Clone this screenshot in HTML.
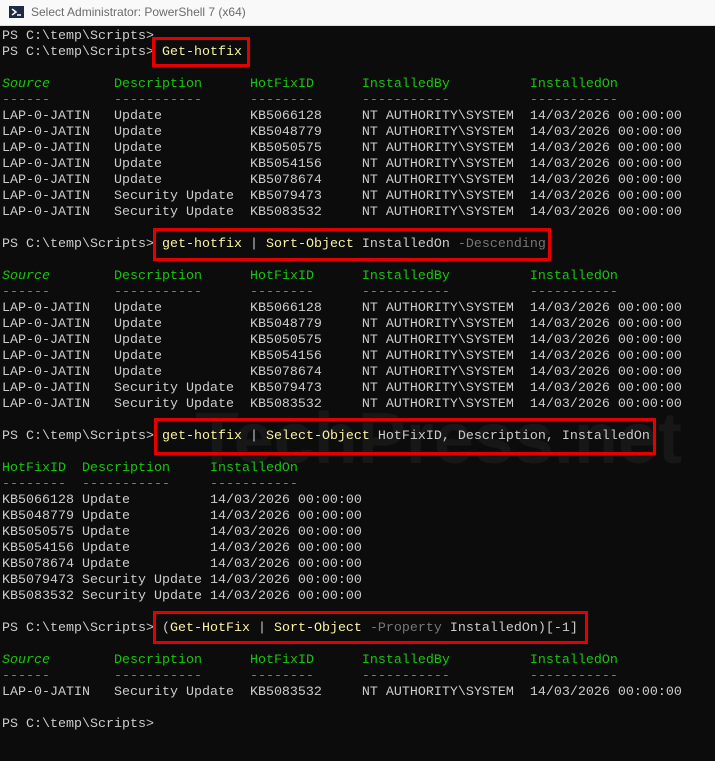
<!DOCTYPE html>
<html><head><meta charset="utf-8"><style>
html,body{margin:0;padding:0;}
body{width:715px;height:761px;overflow:hidden;background:#0c0c0c;position:relative;font-family:"Liberation Mono",monospace;}
#title{position:absolute;left:0;top:0;width:715px;height:25px;background:#f9f9f9;border-bottom:1px solid #ddd;font-family:"Liberation Sans",sans-serif;font-size:12px;color:#6b6b6b;}
#title span{position:absolute;left:31px;top:5px;}
#icon{position:absolute;left:9px;top:6px;width:15px;height:12px;background:#1f2a44;}
#term{position:absolute;left:2px;top:29px;font-size:13.33px;line-height:16px;color:#cccccc;white-space:pre;}
.g{color:#16c60c}.gi{color:#16c60c;font-style:italic}.y{color:#f9f1a5}.d{color:#767676}
.box{position:absolute;border:3px solid #e50000;box-sizing:border-box;}
#wm{position:absolute;left:195px;top:398px;font-family:"Liberation Sans",sans-serif;font-size:72px;font-weight:bold;color:#171717;white-space:nowrap;}
</style></head><body>
<div id="title"><div id="icon"><svg width="15" height="12"><path d="M3 3 L7 6 L3 9" stroke="#fff" stroke-width="1.5" fill="none"/><path d="M8 9 H12" stroke="#fff" stroke-width="1.5"/></svg></div><span>Select Administrator: PowerShell 7 (x64)</span></div>
<div id="wm">TechPress.net</div>
<div id="term">PS C:\temp\Scripts&gt;
PS C:\temp\Scripts&gt; <span class="y">Get-hotfix</span>

<span class="gi">Source</span><span class="g">        Description      HotFixID      InstalledBy          InstalledOn</span>
<span class="g">------        -----------      --------      -----------          -----------</span>
LAP-0-JATIN   Update           KB5066128     NT AUTHORITY\SYSTEM  14/03/2026 00:00:00
LAP-0-JATIN   Update           KB5048779     NT AUTHORITY\SYSTEM  14/03/2026 00:00:00
LAP-0-JATIN   Update           KB5050575     NT AUTHORITY\SYSTEM  14/03/2026 00:00:00
LAP-0-JATIN   Update           KB5054156     NT AUTHORITY\SYSTEM  14/03/2026 00:00:00
LAP-0-JATIN   Update           KB5078674     NT AUTHORITY\SYSTEM  14/03/2026 00:00:00
LAP-0-JATIN   Security Update  KB5079473     NT AUTHORITY\SYSTEM  14/03/2026 00:00:00
LAP-0-JATIN   Security Update  KB5083532     NT AUTHORITY\SYSTEM  14/03/2026 00:00:00

PS C:\temp\Scripts&gt; <span class="y">get-hotfix</span> | <span class="y">Sort-Object</span> InstalledOn <span class="d">-Descending</span>

<span class="gi">Source</span><span class="g">        Description      HotFixID      InstalledBy          InstalledOn</span>
<span class="g">------        -----------      --------      -----------          -----------</span>
LAP-0-JATIN   Update           KB5066128     NT AUTHORITY\SYSTEM  14/03/2026 00:00:00
LAP-0-JATIN   Update           KB5048779     NT AUTHORITY\SYSTEM  14/03/2026 00:00:00
LAP-0-JATIN   Update           KB5050575     NT AUTHORITY\SYSTEM  14/03/2026 00:00:00
LAP-0-JATIN   Update           KB5054156     NT AUTHORITY\SYSTEM  14/03/2026 00:00:00
LAP-0-JATIN   Update           KB5078674     NT AUTHORITY\SYSTEM  14/03/2026 00:00:00
LAP-0-JATIN   Security Update  KB5079473     NT AUTHORITY\SYSTEM  14/03/2026 00:00:00
LAP-0-JATIN   Security Update  KB5083532     NT AUTHORITY\SYSTEM  14/03/2026 00:00:00

PS C:\temp\Scripts&gt; <span class="y">get-hotfix</span> | <span class="y">Select-Object</span> HotFixID, Description, InstalledOn

<span class="g">HotFixID  Description     InstalledOn</span>
<span class="g">--------  -----------     -----------</span>
KB5066128 Update          14/03/2026 00:00:00
KB5048779 Update          14/03/2026 00:00:00
KB5050575 Update          14/03/2026 00:00:00
KB5054156 Update          14/03/2026 00:00:00
KB5078674 Update          14/03/2026 00:00:00
KB5079473 Security Update 14/03/2026 00:00:00
KB5083532 Security Update 14/03/2026 00:00:00

PS C:\temp\Scripts&gt; (<span class="y">Get-HotFix</span> | <span class="y">Sort-Object</span> <span class="d">-Property</span> InstalledOn)[-1]

<span class="gi">Source</span><span class="g">        Description      HotFixID      InstalledBy          InstalledOn</span>
<span class="g">------        -----------      --------      -----------          -----------</span>
LAP-0-JATIN   Security Update  KB5083532     NT AUTHORITY\SYSTEM  14/03/2026 00:00:00

PS C:\temp\Scripts&gt;</div>
<div class="box" style="left:152px;top:37px;width:98px;height:30px"></div>
<div class="box" style="left:153px;top:228px;width:398px;height:33px"></div>
<div class="box" style="left:154px;top:418px;width:502px;height:37px"></div>
<div class="box" style="left:153px;top:611px;width:435px;height:33px"></div>
</body></html>
